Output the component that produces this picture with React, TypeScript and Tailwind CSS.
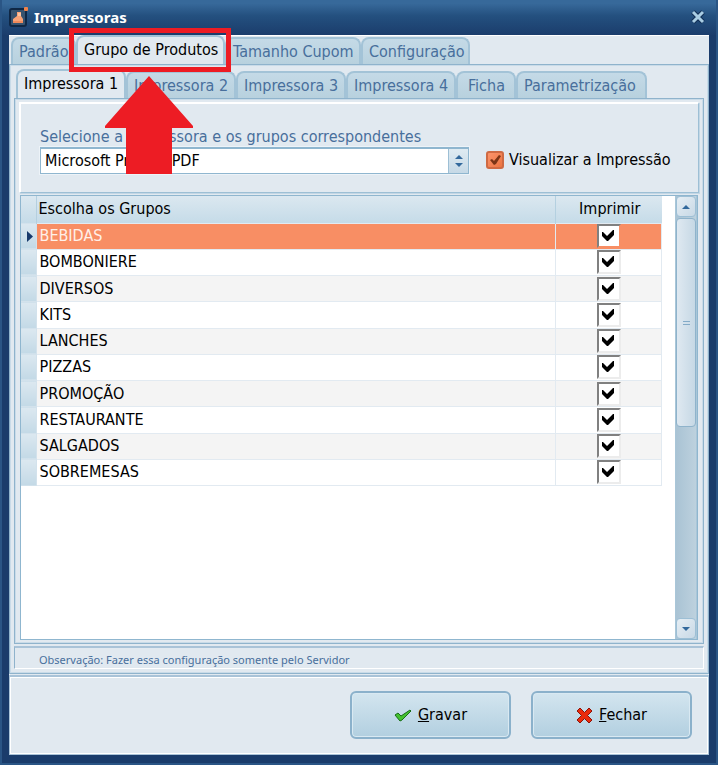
import React from "react";

const groups = [
  "BEBIDAS",
  "BOMBONIERE",
  "DIVERSOS",
  "KITS",
  "LANCHES",
  "PIZZAS",
  "PROMOÇÃO",
  "RESTAURANTE",
  "SALGADOS",
  "SOBREMESAS",
];

type TabProps = {
  label: string;
  active?: boolean;
  className?: string;
};

const Tab: React.FC<TabProps> = ({ label, active, className = "pl-[6px]" }) => {
  return (
    <button
      type="button"
      role="tab"
      aria-selected={!!active}
      className={`shrink-0 whitespace-nowrap rounded-t-lg border-2 border-b-0 border-[#a3c3d7] text-left leading-5 ${
        active
          ? "-mb-px h-[30px] bg-[#e1e9f0] pb-[2px] text-black"
          : "h-[27px] bg-linear-to-b from-[#c4dae7] to-[#b8d1de] text-[#486f9c]"
      } ${className}`}
    >
      {label}
    </button>
  );
};

const AppIcon: React.FC = () => {
  return (
    <svg width="20" height="20" viewBox="0 0 20 20" aria-hidden="true">
      <rect x="2" y="2" width="16" height="17" rx="2" fill="#37536f" stroke="#0f2745" strokeWidth="2" />
      <path d="M9 5h4v4l2 3v4H5v-4l4-3z" fill="#f9a377" />
      <path d="M10 6h3v3h-3z" fill="#fcc3a0" />
      <path d="M5 14h10v2H5z" fill="#f08a5c" />
      <rect x="16" y="0" width="4" height="4" rx="1" fill="#f0824a" />
    </svg>
  );
};

const TitleBar: React.FC = () => {
  return (
    <header className="flex h-[35px] items-center bg-linear-to-b from-[#37699a] from-10% via-[#24507f] via-45% to-[#1b3d6c] pr-[9px] pb-[2px] pl-[6px]">
      <AppIcon />
      <h1 className="flex-1 pl-[6px] font-['Noto_Sans',sans-serif] text-[15px] leading-5 font-bold text-white">
        Impressoras
      </h1>
      <button type="button" aria-label="Fechar janela" className="p-[2px]">
        <svg width="14" height="14" viewBox="0 0 14 14" fill="none">
          <path d="M2 2l10 10M12 2L2 12" stroke="#122f55" strokeWidth="5" />
          <path d="M2 2l10 10M12 2L2 12" stroke="#a9cde4" strokeWidth="3" />
        </svg>
      </button>
    </header>
  );
};

const PrinterForm: React.FC = () => {
  return (
    <div className="mx-1 mt-[3px] flex h-[91px] items-end border-t-2 border-r border-b border-l-2 border-t-white border-r-[#9dbfd5] border-b-[#9dbfd5] border-l-white pb-[18px] pl-[19px] shadow-[1px_1px_0_#c3d7e5]">
      <div className="w-[429px]">
        <label htmlFor="printer" className="block leading-5 text-[#486f9c]">
          Selecione a impressora e os grupos correspondentes
        </label>
        <div className="relative border border-t-2 border-[#8fb6cf] shadow-[0_0_0_1px_#edf3f8]">
          <select
            id="printer"
            className="block h-6 w-full appearance-none bg-white pl-1 leading-6 text-black"
          >
            <option>Microsoft Print to PDF</option>
          </select>
          <span className="pointer-events-none absolute inset-y-0 right-0 flex w-5 items-center justify-center border-l border-[#9dbfd5] bg-linear-to-b from-[#dfebf2] to-[#c6d9e6]">
            <svg width="8" height="12" viewBox="0 0 8 12" fill="#33699c">
              <path d="M0 4l4-4 4 4zM0 8l4 4 4-4z" />
            </svg>
          </span>
        </div>
      </div>
      <label className="flex h-7 items-center gap-[5px] whitespace-nowrap pl-[17px] text-black">
        <span className="relative block size-[18px]">
          <input
            type="checkbox"
            defaultChecked
            className="block size-[18px] appearance-none rounded-[3px] border-2 border-[#cf6a43] bg-linear-to-br from-[#fb946b] to-[#ec7440]"
          />
          <svg
            className="pointer-events-none absolute inset-0"
            width="18"
            height="18"
            viewBox="0 0 18 18"
            fill="#7c3516"
          >
            <path d="M4 9l2-1 2 2 5-6 2 1-5 8-2 1z" />
          </svg>
        </span>
        Visualizar a Impressão
      </label>
    </div>
  );
};

const GroupsTable: React.FC = () => {
  return (
    <table className="mr-[13px] h-[290px] min-w-0 flex-1 table-fixed border-collapse">
      <thead>
        <tr className="h-[27px] bg-linear-to-b from-[#dbe8f0] to-[#c5dbe8] text-black">
          <th className="w-[15px] border-r border-[#b4cfdf] p-0" />
          <th className="border-r border-[#b4d0e0] p-0 pl-[2px] text-left font-normal">
            Escolha os Grupos
          </th>
          <th className="w-[106px] p-0 pl-[2px] text-center font-normal">Imprimir</th>
        </tr>
      </thead>
      <tbody>
        {groups.map((group, i) => (
          <tr
            key={group}
            className={
              i === 0
                ? "bg-[#f88e64] text-[#fff0e8]"
                : i % 2
                  ? "bg-white text-black"
                  : "bg-[#f4f4f4] text-black"
            }
          >
            <td className="border-t border-r border-[#d3e2ec] bg-linear-to-b from-[#dce8f0] to-[#c3d9e6] p-0">
              {i === 0 && (
                <svg className="ml-auto mr-[3px]" width="6" height="11" viewBox="0 0 6 11" fill="#17396b">
                  <path d="M0 0l6 5.500-6 5.500z" />
                </svg>
              )}
            </td>
            <td className="border border-[#e2eaf1] p-0 pl-[3px] leading-5">{group}</td>
            <td className="border border-[#e2eaf1] p-0">
              <span className="relative mx-auto block size-6 bg-white">
                <input
                  type="checkbox"
                  defaultChecked
                  aria-label={`Imprimir ${group}`}
                  className={`block size-6 appearance-none border-2 border-t-[#808080] border-l-[#808080] ${
                    i === 0
                      ? "border-r-[#f88e64] border-b-[#f88e64]"
                      : "border-r-[#ececec] border-b-[#ececec]"
                  }`}
                />
                <svg
                  className="pointer-events-none absolute inset-0"
                  width="24"
                  height="24"
                  viewBox="0 0 24 24"
                >
                  <path d="M5 8h1l4 4 6-6h1v5l-6 6h-1l-5-5z" fill="#000" />
                </svg>
              </span>
            </td>
          </tr>
        ))}
      </tbody>
    </table>
  );
};

const ScrollBar: React.FC = () => {
  return (
    <div className="flex w-[22px] flex-col border-x border-[#a9c6d8] bg-linear-to-r from-[#a9c3d4] to-[#bdd1de]">
      <button
        type="button"
        aria-label="Rolar para cima"
        className="flex h-[21px] items-center justify-center rounded border border-[#9dbfd5] bg-linear-to-br from-[#e6eef4] to-[#c8d9e6]"
      >
        <svg width="8" height="4" viewBox="0 0 8 4" fill="#33699c">
          <path d="M0 4l4-4 4 4z" />
        </svg>
      </button>
      <div className="mt-px flex h-[209px] flex-col items-center justify-center gap-[2px] rounded border border-[#8fb3cb] bg-linear-to-r from-[#dfe9f1] to-[#c6d8e5]">
        <span className="h-px w-[7px] bg-[#84abc8]" />
        <span className="h-px w-[7px] bg-[#84abc8]" />
      </div>
      <button
        type="button"
        aria-label="Rolar para baixo"
        className="mt-auto flex h-[21px] items-center justify-center rounded border border-[#9dbfd5] bg-linear-to-br from-[#e6eef4] to-[#c8d9e6]"
      >
        <svg width="8" height="4" viewBox="0 0 8 4" fill="#33699c">
          <path d="M0 0l4 4 4-4z" />
        </svg>
      </button>
    </div>
  );
};

type ActionButtonProps = {
  label: string;
  children: React.ReactNode;
};

const ActionButton: React.FC<ActionButtonProps> = ({ label, children }) => {
  return (
    <button
      type="button"
      className="flex h-12 w-[161px] items-center justify-center gap-[6px] rounded-md border-2 border-[#8bb1cb] bg-linear-to-b from-[#d3e5ef] to-[#b2cfe0] text-black inset-shadow-[0_0_0_1px_#d9e9f2]"
    >
      {children}
      <span>
        <span className="underline">{label[0]}</span>
        {label.slice(1)}
      </span>
    </button>
  );
};

// red frame and arrow that point at the "Grupo de Produtos" tab
const Callout: React.FC = () => {
  return (
    <div className="pointer-events-none absolute top-[26px] left-[67px] w-[162px]">
      <div className="h-11 border-[5px] border-[#ed1c24]" />
      <svg className="mt-1 ml-9" width="88" height="98" viewBox="0 0 88 98" fill="#ed1c24">
        <path d="M44 0l44 50v2H67v46H21V52H0v-2z" />
      </svg>
    </div>
  );
};

const App: React.FC = () => {
  return (
    <div className="relative flex min-h-screen flex-col border-2 border-[#2a5585] bg-[#1a3c6b] px-[7px] pb-2 font-['DejaVu_Sans_Condensed','DejaVu_Sans',sans-serif] text-base">
      <div className="-mx-[7px] -mt-[2px]">
        <TitleBar />
      </div>
      <main className="flex flex-1 flex-col bg-[#e1e9f0]">
        <div role="tablist" className="flex h-[29px] items-end border-t border-white pl-[2px]">
          <Tab label="Padrão" className="w-[65px] pl-[6px]" />
          <Tab label="Grupo de Produtos" active className="w-[149px] pl-[6px]" />
          <Tab label="Tamanho Cupom" className="w-[136px] pl-[6px]" />
          <Tab label="Configuração" className="w-[109px] pl-[6px]" />
        </div>
        <div className="flex flex-1 flex-col border border-[#8fb3cc] px-1 shadow-[inset_0_0_0_1px_#c9dbe8]">
          <div role="tablist" className="flex h-[33px] items-end pl-[2px]">
            <Tab label="Impressora 1" active className="w-[110px] pl-[6px]" />
            <Tab label="Impressora 2" className="w-[110px] pl-[6px]" />
            <Tab label="Impressora 3" className="w-[110px] pl-[6px]" />
            <Tab label="Impressora 4" className="w-[110px] pl-[6px]" />
            <Tab label="Ficha" className="w-[60px] pl-[10px]" />
            <Tab label="Parametrização" className="w-[131px] pl-[6px]" />
          </div>
          <div className="flex flex-1 flex-col border border-[#8fb3cc] shadow-[inset_0_0_0_1px_#c9dbe8]">
            <PrinterForm />
            <div className="mx-[5px] mt-[2px] mb-[3px] flex flex-1 border border-[#8fb6cf] bg-white">
              <GroupsTable />
              <ScrollBar />
            </div>
          </div>
          <p className="mt-[2px] mb-1 h-[23px] border border-t-2 border-t-[#a9c3d8] border-r-white border-b-white border-l-[#8fb3cc] pl-6 font-['Noto_Sans',sans-serif] text-[11px] leading-6 text-[#486f9c]">
            Observação: Fazer essa configuração somente pelo Servidor
          </p>
        </div>
        <footer className="mt-px flex h-20 items-start justify-end gap-5 border border-t-2 border-[#a9c3d8] pt-[14px] pr-4 inset-shadow-[0_0_0_1px_#fff]">
          <ActionButton label="Gravar">
            <svg width="18" height="14" viewBox="0 0 18 14">
              <path d="M1 7l3-2 3 3 9-6 1 1-9 9-2 1z" fill="#43c22f" stroke="#176d17" />
            </svg>
          </ActionButton>
          <ActionButton label="Fechar">
            <svg width="17" height="17" viewBox="0 0 17 17">
              <path
                d="M4 1l4.500 4.500L13 1l3 3-4.500 4.500L16 13l-3 3-4.500-4.500L4 16l-3-3 4.500-4.500L1 4z"
                fill="#ea2b0c"
                stroke="#8d1207"
              />
            </svg>
          </ActionButton>
        </footer>
      </main>
      <Callout />
    </div>
  );
};

export default App;
